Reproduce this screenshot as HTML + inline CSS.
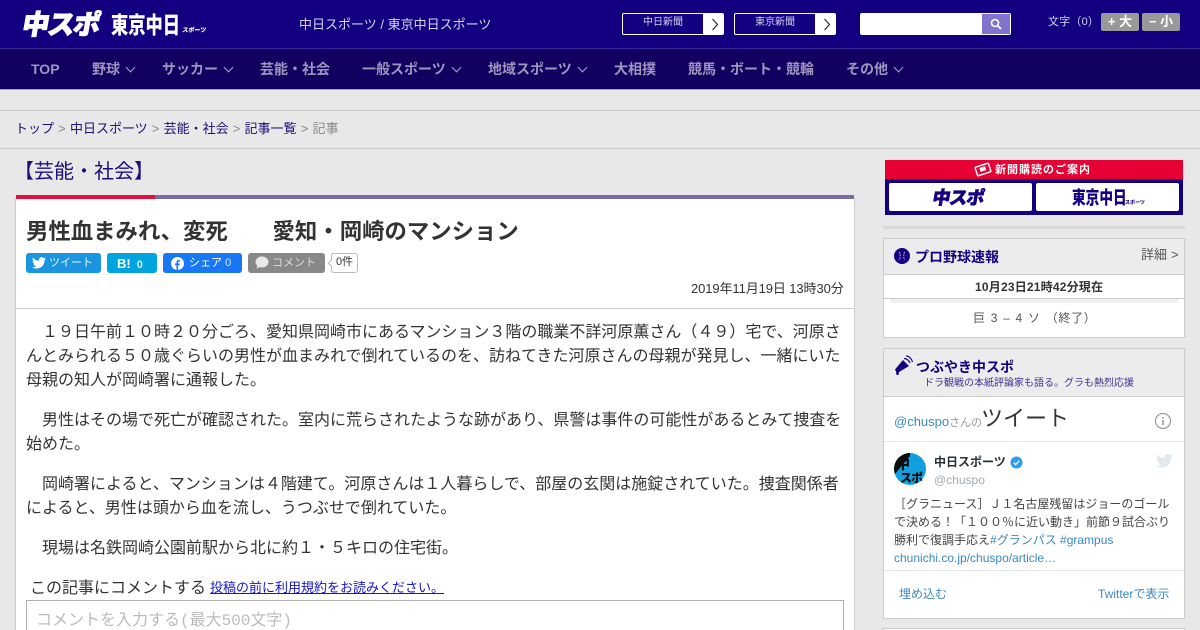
<!DOCTYPE html>
<html lang="ja"><head><meta charset="utf-8"><style>
*{box-sizing:border-box}
html,body{margin:0;padding:0;width:1200px;height:630px;overflow:hidden}
#w{position:absolute;left:0;top:0;width:1200px;height:630px;overflow:hidden;background:#e8e8e8;font-family:"Liberation Sans","WenQuanYi Zen Hei","Noto Sans CJK JP",sans-serif;color:#333}
.a{position:absolute;white-space:nowrap}
.logo{font-weight:900;font-family:"Noto Sans CJK JP",sans-serif;transform-origin:left top}
.btn{position:absolute;height:20px;border-radius:3px;color:#fff;font-size:12px;line-height:21px;white-space:nowrap}
.nav{position:absolute;top:60px;font-size:14px;line-height:18px;color:#9d97c0;white-space:nowrap;font-weight:bold}
.chev{position:absolute;width:7px;height:7px;border-right:1.3px solid #aaa7c8;border-bottom:1.3px solid #aaa7c8;transform:rotate(45deg)}
.p{position:absolute;left:26px;width:818px;font-size:16px;line-height:24px;color:#333}
</style></head><body><div id="w">
<div class="a" style="left:0;top:0;width:1200px;height:48px;background:#130080"></div>
<div class="a" style="left:0;top:48px;width:1200px;height:1px;background:#35259a"></div>
<div class="a" style="left:0;top:49px;width:1200px;height:40px;background:#120060"></div>
<div class="a" style="left:0;top:89px;width:1200px;height:1px;background:#aaa"></div>
<div class="a" style="left:0;top:110px;width:1200px;height:1px;background:#ccc"></div>
<div class="a" style="left:0;top:148px;width:1200px;height:1px;background:#ccc"></div>

<div class="a logo" style="left:26px;top:5px;font-size:27px;line-height:36px;color:#fff;letter-spacing:-1.500px;-webkit-text-stroke:1px #fff;transform:skewX(-10deg)">中スポ</div>
<div class="a logo" style="left:111px;top:8px;font-size:23px;line-height:30px;color:#fff;transform:scaleX(.75);letter-spacing:0">東京中日</div>
<div class="a logo" style="left:183px;top:25px;font-size:6px;line-height:10px;color:#fff;transform:skewX(-8deg)">スポーツ</div>
<div class="a" style="left:299px;top:16px;font-size:13px;line-height:18px;color:#d6d3ee">中日スポーツ / 東京中日スポーツ</div>

<div class="a" style="left:622px;top:13px;width:102px;height:22px;border:1px solid #fff;border-radius:2px;background:#130080;color:#d6d3ee;font-size:10px;line-height:18px;padding-left:20px">中日新聞</div>
<div class="a" style="left:703px;top:14px;width:21px;height:20px;background:#fff"></div>
<svg class="a" style="left:711px;top:18px" width="8" height="13"><path d="M1.500 1L6.500 6.500L1.500 12" fill="none" stroke="#222" stroke-width="1.100"/></svg>
<div class="a" style="left:734px;top:13px;width:102px;height:22px;border:1px solid #fff;border-radius:2px;background:#130080;color:#d6d3ee;font-size:10px;line-height:18px;padding-left:20px">東京新聞</div>
<div class="a" style="left:815px;top:14px;width:21px;height:20px;background:#fff"></div>
<svg class="a" style="left:823px;top:18px" width="8" height="13"><path d="M1.500 1L6.500 6.500L1.500 12" fill="none" stroke="#222" stroke-width="1.100"/></svg>
<div class="a" style="left:860px;top:13px;width:151px;height:22px;background:#fff;border-radius:2px"></div>
<div class="a" style="left:982px;top:14px;width:28px;height:20px;background:#8074cc"></div>
<svg class="a" style="left:990px;top:18px" width="12" height="12"><circle cx="5" cy="5" r="3.500" fill="none" stroke="#fff" stroke-width="1.600"/><path d="M7.500 7.500L11 11" stroke="#fff" stroke-width="1.800"/></svg>
<div class="a" style="left:1048px;top:15px;font-size:11px;line-height:14px;color:#d6d3ee;letter-spacing:.2px">文字（0）</div>
<div class="a" style="left:1101px;top:13px;width:38px;height:18px;background:#999;border-radius:2px;color:#fff;font-weight:bold;font-size:13px;line-height:18px;text-align:center">+ 大</div>
<div class="a" style="left:1142px;top:13px;width:38px;height:18px;background:#999;border-radius:2px;color:#fff;font-weight:bold;font-size:13px;line-height:18px;text-align:center">− 小</div>

<div class="nav" style="left:31px">TOP</div>
<div class="nav" style="left:92px">野球</div><div class="chev" style="left:127px;top:64px"></div>
<div class="nav" style="left:162px">サッカー</div><div class="chev" style="left:225px;top:64px"></div>
<div class="nav" style="left:260px">芸能・社会</div>
<div class="nav" style="left:362px">一般スポーツ</div><div class="chev" style="left:453px;top:64px"></div>
<div class="nav" style="left:488px">地域スポーツ</div><div class="chev" style="left:579px;top:64px"></div>
<div class="nav" style="left:614px">大相撲</div>
<div class="nav" style="left:688px">競馬・ボート・競輪</div>
<div class="nav" style="left:846px">その他</div><div class="chev" style="left:895px;top:64px"></div>

<div class="a" style="left:15px;top:120px;font-size:13px;line-height:18px;color:#888;word-spacing:.55px"><span style="color:#1c0f78">トップ</span> &gt; <span style="color:#1c0f78">中日スポーツ</span> &gt; <span style="color:#1c0f78">芸能・社会</span> &gt; <span style="color:#1c0f78">記事一覧</span> &gt; 記事</div>
<div class="a" style="left:14px;top:159px;font-size:20px;line-height:26px;color:#1c0f78">【芸能・社会】</div>

<div class="a" style="left:15px;top:198px;width:840px;height:440px;background:#fff;border:1px solid #ccc;border-top:0"></div>
<div class="a" style="left:16px;top:195px;width:838px;height:4px;background:#7a6cab"></div>
<div class="a" style="left:16px;top:195px;width:139px;height:4px;background:#e2103c"></div>
<div class="a" style="left:26px;top:218px;font-size:22.400px;line-height:28px;font-weight:bold;color:#333">男性血まみれ、変死　　愛知・岡崎のマンション</div>

<div class="btn" style="left:26px;top:253px;width:75px;background:#1b95e0;padding-left:23px;font-size:11px;color:#e4f2fc">ツイート</div>
<svg class="a" style="left:32px;top:257px" width="14" height="12" viewBox="0 0 24 20"><path fill="#fff" d="M24 2.400c-.9.400-1.800.700-2.800.800 1-.600 1.800-1.600 2.200-2.700-1 .600-2 1-3.100 1.200C19.300.600 18 0 16.600 0c-2.700 0-4.900 2.200-4.900 4.900 0 .400 0 .800.100 1.100C7.700 5.800 4.100 3.900 1.700.900c-.400.700-.700 1.600-.700 2.500 0 1.700.900 3.200 2.200 4.100-.800 0-1.600-.200-2.200-.600v.100c0 2.400 1.700 4.400 3.900 4.800-.700.200-1.500.200-2.200.100.600 2 2.400 3.400 4.600 3.400-2.100 1.600-4.800 2.300-7.300 2 2.200 1.400 4.800 2.200 7.500 2.200 9.100 0 14-7.500 14-14v-.600c1-.700 1.800-1.600 2.500-2.500z"/></svg>
<div class="btn" style="left:107px;top:253px;width:50px;background:#00a4de;padding-left:10px"><b style="font-size:13px">B!</b><span style="margin-left:6px;font-size:11px;font-weight:bold;color:#d5eefa">0</span></div>
<div class="btn" style="left:163px;top:253px;width:79px;background:#1877f2;padding-left:26px;font-size:11px">シェア <span style="color:#d5e5fb">0</span></div>
<svg class="a" style="left:171px;top:257px" width="13" height="13"><circle cx="6.500" cy="6.500" r="6.500" fill="#fff"/><path fill="#1877f2" d="M5.500 13V8.300H4V6.500h1.500V5.200c0-1.500.9-2.300 2.200-2.300h1.200v1.600H8c-.7 0-.9.400-.9.900v1.100h1.700l-.3 1.800H7.100V13z"/></svg>
<div class="btn" style="left:248px;top:253px;width:77px;background:#888;padding-left:24px;font-size:11px;color:#ddd">コメント</div>
<svg class="a" style="left:255px;top:256px" width="14" height="13"><ellipse cx="7" cy="6" rx="6.500" ry="5.500" fill="#e8e8e8"/><path d="M2.500 9L1.500 12.500L6 10.500z" fill="#e8e8e8"/></svg>
<svg class="a" style="left:327px;top:253px" width="32" height="20"><path d="M5.500 .5H28a2.500 2.500 0 0 1 2.500 2.500V17a2.500 2.500 0 0 1-2.500 2.500H7a2.500 2.500 0 0 1-2.500-2.500V13L1 10L4.500 7V2.500z" fill="#fff" stroke="#bbb"/></svg>
<div class="a" style="left:331px;top:253px;width:27px;height:20px;font-size:11px;line-height:19px;text-align:center;color:#333">0件</div>
<div class="a" style="left:691px;top:280px;font-size:13px;line-height:18px;color:#333;letter-spacing:-.1px">2019年11月19日 13時30分</div>
<div class="a" style="left:16px;top:308px;width:838px;height:1px;background:#ccc"></div>

<div class="p" style="top:321px">　１９日午前１０時２０分ごろ、愛知県岡崎市にあるマンション３階の職業不詳河原薫さん（４９）宅で、河原さんとみられる５０歳ぐらいの男性が血まみれで倒れているのを、訪ねてきた河原さんの母親が発見し、一緒にいた母親の知人が岡崎署に通報した。</div>
<div class="p" style="top:409px">　男性はその場で死亡が確認された。室内に荒らされたような跡があり、県警は事件の可能性があるとみて捜査を始めた。</div>
<div class="p" style="top:473px">　岡崎署によると、マンションは４階建て。河原さんは１人暮らしで、部屋の玄関は施錠されていた。捜査関係者によると、男性は頭から血を流し、うつぶせで倒れていた。</div>
<div class="p" style="top:537px">　現場は名鉄岡崎公園前駅から北に約１・５キロの住宅街。</div>
<div class="a" style="left:30px;top:579px;font-size:16px;line-height:20px;color:#333">この記事にコメントする</div>
<div class="a" style="left:210px;top:579px;font-size:13px;line-height:17px;color:#1515cc;text-decoration:underline">投稿の前に利用規約をお読みください。</div>
<div class="a" style="left:26px;top:600px;width:818px;height:40px;background:#fff;border:1px solid #b0b0b0"></div>
<div class="a" style="left:36px;top:611px;font-size:16px;line-height:20px;color:#bbb;font-family:'Liberation Mono','WenQuanYi Zen Hei',monospace">コメントを入力する(最大500文字)</div>

<div class="a" style="left:885px;top:160px;width:298px;height:55px;background:#130080"></div>
<div class="a" style="left:885px;top:160px;width:298px;height:19px;background:#e60033"></div>
<svg class="a" style="left:974px;top:161px" width="19" height="17"><rect x="2" y="4" width="14" height="9" rx="1" transform="rotate(-18 9 8.500)" fill="none" stroke="#fff" stroke-width="1.500"/><rect x="6" y="6" width="6" height="4" transform="rotate(-18 9 8.500)" fill="#fff"/></svg>
<div class="a" style="left:995px;top:163px;font-size:11px;line-height:14px;font-weight:bold;color:#fff;letter-spacing:1px">新聞購読のご案内</div>
<div class="a" style="left:889px;top:183px;width:143px;height:28px;background:#fff;border-radius:2px"></div>
<div class="a" style="left:1036px;top:183px;width:143px;height:28px;background:#fff;border-radius:2px"></div>
<div class="a logo" style="left:935px;top:184px;font-size:18px;line-height:26px;color:#130080;letter-spacing:-1px;-webkit-text-stroke:.6px #130080;transform:skewX(-10deg)">中スポ</div>
<div class="a logo" style="left:1072px;top:184px;font-size:18px;line-height:26px;color:#130080;transform:scaleX(.76)">東京中日</div>
<div class="a logo" style="left:1125px;top:198px;font-size:5px;line-height:9px;color:#130080">スポーツ</div>
<div class="a" style="left:883px;top:226px;width:302px;height:3px;background:#d8d8d8"></div>

<div class="a" style="left:883px;top:238px;width:302px;height:100px;background:#fff;border:1px solid #ccc"></div>
<div class="a" style="left:884px;top:239px;width:300px;height:35px;background:#ececec"></div>
<div class="a" style="left:884px;top:274px;width:300px;height:1px;background:#ccc"></div>
<div class="a" style="left:884px;top:298px;width:300px;height:1px;background:#ccc"></div>
<div class="a" style="left:890px;top:299px;width:288px;height:4px;background:#f0f0f0"></div>
<svg class="a" style="left:894px;top:248px" width="16" height="16"><circle cx="8" cy="8" r="8" fill="#130080"/><path d="M5.500 4Q7 8 5.500 12M10.500 4Q9 8 10.500 12" fill="none" stroke="#ccc" stroke-width="1" stroke-dasharray="1.500 1"/></svg>
<div class="a" style="left:915px;top:247px;font-size:14px;line-height:20px;font-weight:bold;color:#130080">プロ野球速報</div>
<div class="a" style="left:1141px;top:246px;font-size:13px;line-height:18px;color:#555;word-spacing:.4px">詳細 &gt;</div>
<div class="a" style="left:975px;top:278px;font-size:12px;line-height:18px;font-weight:bold;color:#333;letter-spacing:.2px">10月23日21時42分現在</div>
<div class="a" style="left:973px;top:309px;font-size:12px;line-height:18px;color:#555;word-spacing:1px;letter-spacing:.7px">巨 3 – 4 ソ （終了）</div>

<div class="a" style="left:883px;top:348px;width:302px;height:271px;background:#fff;border:1px solid #ccc"></div>
<div class="a" style="left:884px;top:349px;width:300px;height:47px;background:#ececec"></div>
<div class="a" style="left:884px;top:396px;width:300px;height:1px;background:#ccc"></div>
<svg class="a" style="left:893px;top:355px" width="20" height="20"><path fill="#130080" d="M2 14.500L10 5L16 11L6 17L5.500 20L3.500 20L3 16.500z"/><path d="M11 3.500Q15 3.500 17 8M13 .8Q18 1.500 19.500 7" fill="none" stroke="#130080" stroke-width="1.200"/></svg>
<div class="a" style="left:916px;top:358px;font-size:14px;line-height:18px;font-weight:bold;color:#130080">つぶやき中スポ</div>
<div class="a" style="left:924px;top:377px;font-size:10px;line-height:14px;color:#3d3390">ドラ観戦の本紙評論家も語る。グラも熱烈応援</div>

<div class="a" style="left:894px;top:413px;font-size:13px;line-height:18px;color:#999"><span style="color:#3b88c3">@chuspo</span><span style="font-size:11px">さんの</span></div>
<div class="a" style="left:981px;top:405px;font-size:22px;line-height:28px;color:#333">ツイート</div>
<svg class="a" style="left:1154px;top:412px" width="18" height="18"><circle cx="9" cy="9" r="7.500" fill="none" stroke="#99a" stroke-width="1.200"/><rect x="8.300" y="8" width="1.400" height="5" fill="#889"/><rect x="8.300" y="5" width="1.400" height="1.500" fill="#889"/></svg>
<div class="a" style="left:884px;top:441px;width:300px;height:1px;background:#e4e8ec"></div>
<svg class="a" style="left:894px;top:453px" width="32" height="32"><defs><clipPath id="c"><circle cx="16" cy="16" r="16"/></clipPath></defs><g clip-path="url(#c)"><rect width="32" height="32" fill="#129fe0"/><path d="M0 0H16V3L0 22z" fill="#0d0d0d"/></g><text x="2" y="16" font-size="14" font-weight="900" fill="#0d0d0d" font-family="Noto Sans CJK JP">中</text><text x="6" y="29" font-size="12" font-weight="900" letter-spacing="-1" fill="#0d0d0d" font-family="Noto Sans CJK JP">スポ</text></svg>
<div class="a" style="left:934px;top:453px;font-size:12px;line-height:18px;font-weight:bold;color:#292f33">中日スポーツ</div>
<svg class="a" style="left:1010px;top:456px" width="13" height="13"><circle cx="6.500" cy="6.500" r="6" fill="#2a9df0"/><path d="M3.800 6.800L5.700 8.600L9.300 4.800" fill="none" stroke="#fff" stroke-width="1.400"/></svg>
<div class="a" style="left:934px;top:472px;font-size:12px;line-height:16px;color:#a0aab2">@chuspo</div>
<svg class="a" style="left:1156px;top:454px" width="17" height="14" viewBox="0 0 24 20"><path fill="#e2e8ee" d="M24 2.400c-.9.400-1.800.700-2.800.800 1-.600 1.800-1.600 2.200-2.700-1 .600-2 1-3.100 1.200C19.300.600 18 0 16.600 0c-2.700 0-4.900 2.200-4.900 4.900 0 .400 0 .800.100 1.100C7.700 5.800 4.100 3.900 1.700.900c-.400.700-.700 1.600-.700 2.500 0 1.700.900 3.200 2.200 4.100-.800 0-1.600-.200-2.200-.600v.100c0 2.400 1.700 4.400 3.900 4.800-.700.200-1.500.200-2.200.100.600 2 2.400 3.400 4.600 3.400-2.100 1.600-4.800 2.300-7.300 2 2.200 1.400 4.800 2.200 7.500 2.200 9.100 0 14-7.500 14-14v-.600c1-.700 1.800-1.600 2.500-2.500z"/></svg>
<div class="a" style="left:894px;top:495px;width:290px;font-size:12px;line-height:18px;color:#444;white-space:normal">［グラニュース］Ｊ１名古屋残留はジョーのゴール<br>で決める！「１００％に近い動き」前節９試合ぶり<br>勝利で復調手応え<span style="color:#3b88c3">#グランパス #grampus</span><br><span style="color:#3b88c3">chunichi.co.jp/chuspo/article…</span></div>
<div class="a" style="left:884px;top:570px;width:300px;height:1px;background:#e4e8ec"></div>
<div class="a" style="left:899px;top:585px;font-size:12px;line-height:18px;color:#3b88c3">埋め込む</div>
<div class="a" style="left:1098px;top:585px;font-size:12px;line-height:18px;color:#3b88c3">Twitterで表示</div>
<div class="a" style="left:883px;top:628px;width:302px;height:4px;background:#fff;border:1px solid #ccc"></div>
</div></body></html>
